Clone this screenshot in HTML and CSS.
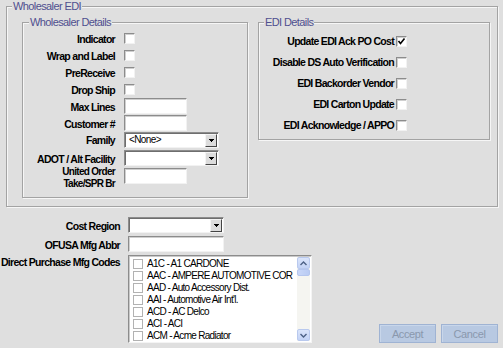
FILE: index.html
```html
<!DOCTYPE html>
<html lang="en">
<head>
  <meta charset="UTF-8">
  <meta name="viewport" content="width=device-width, initial-scale=1.0">
  <title>Wholesaler EDI</title>
  <link rel="stylesheet" href="styles.css">
</head>
<body>
  <div class="window">
    <fieldset class="group group-main">
      <legend>Wholesaler EDI</legend>
      <div class="group-main-body">

        <fieldset class="group group-wholesaler">
          <legend>Wholesaler Details</legend>
          <div class="form-grid form-wholesaler">
            <span class="label">Indicator</span>
            <span class="check"></span>

            <span class="label">Wrap and Label</span>
            <span class="check"></span>

            <span class="label">PreReceive</span>
            <span class="check"></span>

            <span class="label">Drop Ship</span>
            <span class="check"></span>

            <span class="label">Max Lines</span>
            <span class="textbox"></span>

            <span class="label">Customer #</span>
            <span class="textbox"></span>

            <span class="label label-family">Family</span>
            <span class="combo">
              <span class="combo-text">&lt;None&gt;</span>
              <span class="combo-btn">
                <svg width="5" height="3" viewBox="0 0 5 3"><rect x="0" y="0" width="5" height="1"/><rect x="1" y="1" width="3" height="1"/><rect x="2" y="2" width="1" height="1"/></svg>
              </span>
            </span>

            <span class="label">ADOT / Alt Facility</span>
            <span class="combo">
              <span class="combo-text"></span>
              <span class="combo-btn">
                <svg width="5" height="3" viewBox="0 0 5 3"><rect x="0" y="0" width="5" height="1"/><rect x="1" y="1" width="3" height="1"/><rect x="2" y="2" width="1" height="1"/></svg>
              </span>
            </span>

            <span class="label label-2line">United Order<br>Take/SPR Br</span>
            <span class="textbox"></span>
          </div>
        </fieldset>

        <fieldset class="group group-edi">
          <legend>EDI Details</legend>
          <div class="form-grid form-edi">
            <span class="label">Update EDI Ack PO Cost</span>
            <span class="check">
              <svg width="9" height="9" viewBox="0 0 9 9"><polyline points="1.5,4 3.5,6.5 7.5,1.5" fill="none" stroke="#000" stroke-width="1.6"/></svg>
            </span>

            <span class="label">Disable DS Auto Verification</span>
            <span class="check"></span>

            <span class="label">EDI Backorder Vendor</span>
            <span class="check"></span>

            <span class="label">EDI Carton Update</span>
            <span class="check"></span>

            <span class="label">EDI Acknowledge / APPO</span>
            <span class="check"></span>
          </div>
        </fieldset>

      </div>
    </fieldset>

    <div class="extra">
      <div class="form-grid form-extra">
        <span class="label">Cost Region</span>
        <span class="combo">
          <span class="combo-text"></span>
          <span class="combo-btn">
            <svg width="5" height="3" viewBox="0 0 5 3"><rect x="0" y="0" width="5" height="1"/><rect x="1" y="1" width="3" height="1"/><rect x="2" y="2" width="1" height="1"/></svg>
          </span>
        </span>

        <span class="label">OFUSA Mfg Abbr</span>
        <span class="textbox textbox-wide"></span>

        <span class="label label-top">Direct Purchase Mfg Codes</span>
        <div class="listbox">
          <ul class="list-items">
            <li><span class="list-check"></span>A1C - A1 CARDONE</li>
            <li><span class="list-check"></span>AAC - AMPERE AUTOMOTIVE COR</li>
            <li><span class="list-check"></span>AAD - Auto Accessory Dist.</li>
            <li><span class="list-check"></span>AAI - Automotive Air Int'l.</li>
            <li><span class="list-check"></span>ACD - AC Delco</li>
            <li><span class="list-check"></span>ACI - ACI</li>
            <li><span class="list-check"></span>ACM - Acme Radiator</li>
          </ul>
          <div class="scrollbar">
            <span class="scroll-btn">
              <svg width="7" height="5" viewBox="0 0 7 5"><polyline points="0.5,4 3.5,1 6.5,4" fill="none" stroke="#4d6185" stroke-width="1.4"/></svg>
            </span>
            <span class="scroll-thumb"></span>
            <span class="scroll-track"></span>
            <span class="scroll-btn">
              <svg width="7" height="5" viewBox="0 0 7 5"><polyline points="0.5,1 3.5,4 6.5,1" fill="none" stroke="#4d6185" stroke-width="1.4"/></svg>
            </span>
          </div>
        </div>
      </div>

      <div class="btn-group">
        <button class="btn" disabled>Accept</button>
        <button class="btn" disabled>Cancel</button>
      </div>
    </div>
  </div>
</body>
</html>
```

FILE: styles.css
```css
:root {
  --window-bg: #dfdfdf;
  --group-line: #a3a3a3;
  --legend-color: #4f4f8f;
  --sunken-dark: #8c8c8c;
  --sunken-light: #f2f2f2;
}

* {
  box-sizing: border-box;
  margin: 0;
  padding: 0;
}

body {
  font-family: "Liberation Sans", Arial, sans-serif;
  font-size: 11px;
  color: #000;
  background-color: var(--window-bg);
  width: 503px;
  height: 348px;
  overflow: hidden;
}

/* group boxes (etched line) */
.group {
  border: 1px solid var(--group-line);
  box-shadow: inset 1px 1px 0 #f6f6f6, 1px 1px 0 #f6f6f6;
  min-width: 0;
}

.group legend {
  color: var(--legend-color);
  background-color: var(--window-bg);
  font-size: 11px;
  letter-spacing: -0.6px;
  line-height: 12px;
  padding: 0 1px;
  margin-left: 5px;
}

.group-main {
  margin-left: 6px;
  width: 492px;
}

.group-main-body {
  display: flex;
  align-items: flex-start;
  gap: 10px;
  padding: 4px 0 8px 15px;
}

.group-wholesaler {
  width: 226px;
}

.group-wholesaler legend {
  margin-left: 6px;
}

.group-edi {
  width: 232px;
}

.group-edi legend {
  margin-left: 5px;
}

/* label / control grids */
.form-grid {
  display: grid;
}

.form-wholesaler {
  grid-template-columns: 92px auto;
  grid-template-rows: repeat(6, 17px) repeat(3, 18px);
  column-gap: 9px;
  padding: 2px 0 11px;
}

.form-edi {
  grid-template-columns: 135px auto;
  grid-auto-rows: 20px;
  column-gap: 2px;
  row-gap: 1px;
  padding: 3px 0 4px;
}

.form-extra {
  grid-template-columns: 120px auto;
  grid-template-rows: 17px 17px auto;
  column-gap: 8px;
  row-gap: 2px;
}

.label {
  font-size: 10.5px;
  font-weight: bold;
  letter-spacing: -0.7px;
  text-align: right;
  line-height: 12px;
  align-self: center;
  white-space: nowrap;
}

.label-family {
  align-self: start;
  margin-top: 2px;
}

.label-2line {
  font-size: 10px;
  line-height: 11.5px;
  align-self: start;
  margin-top: -2px;
}

.label-top {
  align-self: start;
  margin-top: 1px;
}

/* controls */
.check {
  width: 11px;
  height: 11px;
  align-self: center;
  background-color: #fff;
  border: 1px solid;
  border-color: var(--sunken-dark) var(--sunken-light) var(--sunken-light) var(--sunken-dark);
  box-shadow: inset 1px 1px 0 #cfcfcf;
  display: flex;
  align-items: center;
  justify-content: center;
}

.textbox {
  width: 63px;
  height: 16px;
  background-color: #fff;
  border: 1px solid;
  border-color: var(--sunken-dark) var(--sunken-light) var(--sunken-light) var(--sunken-dark);
  box-shadow: inset 1px 1px 0 #cfcfcf;
}

.textbox-wide {
  width: 96px;
}

.combo {
  width: 95px;
  height: 16px;
  display: flex;
  align-items: center;
  background-color: #fff;
  border: 1px solid;
  border-color: var(--sunken-dark) var(--sunken-light) var(--sunken-light) var(--sunken-dark);
  box-shadow: inset 1px 1px 0 #6e6e6e;
  padding: 1px 1px 1px 4px;
}

.form-extra .combo {
  width: 96px;
}

.combo-text {
  flex: 1;
  font-size: 10px;
  letter-spacing: -0.6px;
  line-height: 12px;
  color: #000;
}

.combo-btn {
  width: 12px;
  height: 13px;
  background-color: #dcdcdc;
  border: 1px solid;
  border-color: #f4f4f4 #444 #444 #f4f4f4;
  display: flex;
  align-items: center;
  justify-content: center;
}

/* check list */
.listbox {
  width: 184px;
  height: 88px;
  display: flex;
  background-color: #fff;
  border: 1px solid;
  border-color: var(--sunken-dark) #f4f4f4 #f4f4f4 var(--sunken-dark);
  box-shadow: inset 1px 1px 0 #c9c9c9;
  padding: 1px;
}

.list-items {
  flex: 1;
  list-style: none;
  padding: 1px 0 0 3px;
  overflow: hidden;
}

.list-items li {
  height: 12px;
  display: flex;
  align-items: center;
  font-size: 10px;
  letter-spacing: -0.7px;
  line-height: 12px;
  white-space: nowrap;
}

.list-check {
  width: 10px;
  height: 10px;
  flex-shrink: 0;
  border: 1px solid #b2b2b2;
  background-color: #fff;
  margin-right: 4px;
}

.scrollbar {
  width: 13px;
  flex-shrink: 0;
  display: flex;
  flex-direction: column;
  background-color: #f5f5f1;
}

.scroll-btn {
  height: 12px;
  display: flex;
  align-items: center;
  justify-content: center;
  background: linear-gradient(#dbe5fb, #c3d3f6);
  border: 1px solid #b9c9ee;
  border-radius: 2px;
}

.scroll-thumb {
  height: 7px;
  background: linear-gradient(90deg, #c9d7f8, #b9cbf3);
  border: 1px solid #b5c6ee;
  border-radius: 2px;
}

.scroll-track {
  flex: 1;
}

/* bottom area */
.extra {
  display: flex;
  justify-content: space-between;
  align-items: flex-end;
  margin-top: 10px;
  padding-right: 5px;
}

.btn-group {
  display: flex;
  gap: 5px;
}

.btn {
  width: 57px;
  height: 19px;
  font-family: inherit;
  font-size: 11px;
  letter-spacing: -0.4px;
  color: #8a98ad;
  background-color: #b8c9e2;
  border: 1px solid #9fb3d3;
  box-shadow: inset 1px 1px 0 #c8d6ea;
}
```
